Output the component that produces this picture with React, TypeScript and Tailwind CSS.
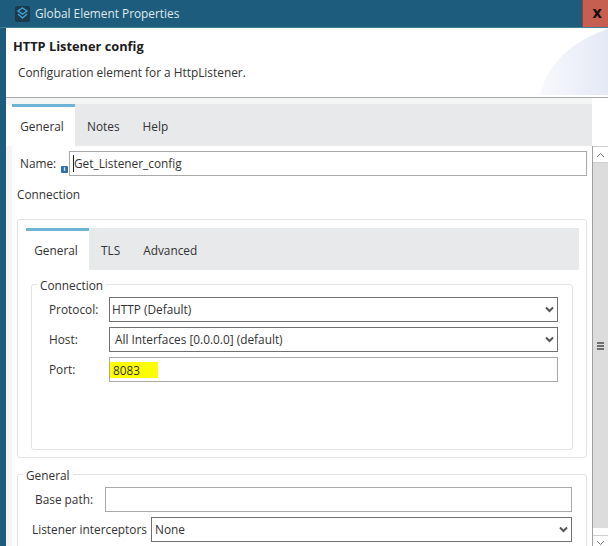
import type { ReactNode } from "react";

const FONT = "font-['Open_Sans','Noto_Sans',sans-serif]";

function Chevron() {
  return (
    <svg width="9" height="7" viewBox="0 0 9 7" className="shrink-0">
      <path d="M1 1.5 L4.5 5 L8 1.5" fill="none" stroke="#555" strokeWidth="2" />
    </svg>
  );
}

function SelectBox({ value, className, pad = "pl-[3px]" }: { value: string; className: string; pad?: string }) {
  return (
    <div className={`flex h-[25px] items-center justify-between border border-[#707070] bg-white pr-[3px] ${pad} ${className}`}>
      <span>{value}</span>
      <Chevron />
    </div>
  );
}

function Tabs({ items, barClass, tabClass }: { items: string[]; barClass: string; tabClass: string }) {
  return (
    <div className={`flex bg-[#e8e9ea] ${barClass}`}>
      <div className={`flex items-center justify-center border-t-[3px] border-[#6db3d6] bg-white pr-[3px] ${tabClass}`}>{items[0]}</div>
      <div className="flex items-center gap-[23px] pl-[12px] pt-[3px]">
        {items.slice(1).map((t) => (
          <span key={t}>{t}</span>
        ))}
      </div>
    </div>
  );
}

function Group({ title, className, children }: { title: string; className: string; children: ReactNode }) {
  return (
    <fieldset className={`rounded-[3px] border border-[#e2e3e3] ${className}`}>
      <legend className="-ml-[4px] translate-y-[1px] px-[3px] leading-[16px]">{title}</legend>
      {children}
    </fieldset>
  );
}

function Scrollbar() {
  return (
    <div className="flex h-[400px] w-[16px] shrink-0 flex-col border-l border-[#a0a0a0] bg-[#dcdcdc]">
      <div className="flex h-[17px] items-center justify-center border-y border-[#cfcfcf] bg-white">
        <svg width="9" height="6" viewBox="0 0 9 6">
          <path d="M1 5 L4.5 1.5 L8 5" fill="none" stroke="#777" strokeWidth="1" />
        </svg>
      </div>
      <div className="flex flex-1 items-center justify-center">
        <div className="flex w-[7px] flex-col gap-[1px]">
          <div className="h-[2px] bg-[#6f6f6f]" />
          <div className="h-[2px] bg-[#6f6f6f]" />
          <div className="h-[2px] bg-[#6f6f6f]" />
        </div>
      </div>
      <div className="h-[7px] bg-white" />
      <div className="flex h-[11px] items-start justify-center border-t border-[#cfcfcf] bg-white pt-[4px]">
        <svg width="9" height="6" viewBox="0 0 9 6">
          <path d="M1 1 L4.5 4.5 L8 1" fill="none" stroke="#777" strokeWidth="1" />
        </svg>
      </div>
    </div>
  );
}

export default function App() {
  return (
    <div className={`${FONT} flex h-[546px] w-[608px] flex-col overflow-hidden bg-[#1d5c7c] text-[11.85px] text-[#333]`}>
      <div className="flex h-[28px] shrink-0 items-stretch border-b border-[#3f7f93]">
        <div className="flex flex-1 items-center pl-[15px] text-[#dfe9ee]">
          <svg width="15" height="16" viewBox="0 0 15 16" className="mr-[5px]">
            <rect width="15" height="16" rx="2" fill="#1b3a4c" />
            <path d="M7.5 2 L12 5 L7.5 8 L3 5 Z" fill="none" stroke="#3f9fd0" strokeWidth="1.5" />
            <path d="M3 8 L7.5 12 L12 8" fill="none" stroke="#3f9fd0" strokeWidth="1.5" />
          </svg>
          Global Element Properties
        </div>
        <div className="flex w-[26px] items-center justify-center border-l border-[#7a4a45] bg-[#c75f50] pl-[3px] pb-[3px] text-[16px] font-bold leading-none text-[#151010]">
          x
        </div>
      </div>

      <div className="ml-[6px] flex min-h-0 flex-1 flex-col bg-white">
        <div className="relative h-[70px] shrink-0 overflow-hidden border-b border-[#a9a9a9] pl-[7px] pt-[10px]">
          <svg width="68" height="66" viewBox="0 0 68 66" className="absolute right-0 top-[1px]">
            <defs>
              <linearGradient id="hdr" x1="0" y1="0" x2="1" y2="0">
                <stop offset="0" stopColor="#f8f9fd" />
                <stop offset="1" stopColor="#e4e9f6" />
              </linearGradient>
            </defs>
            <path d="M0 66 C6 38 30 12 68 0 L68 66 Z" fill="url(#hdr)" />
          </svg>
          <div className="relative text-[12.8px] font-bold leading-[17px] text-[#1c1c1c]">HTTP Listener config</div>
          <div className="relative mt-[9px] pl-[5px] leading-[17px]">Configuration element for a HttpListener.</div>
        </div>

        <div className="flex min-h-0 flex-1">
          <div className="min-w-0 flex-1 bg-white">
            <div className="h-[6px] bg-[#f4f5f5]" />
            <div className="flex h-[442px] flex-col">
              <Tabs
                items={["General", "Notes", "Help"]}
                barClass="ml-[6px] h-[42px] shrink-0"
                tabClass="w-[63px]"
              />
              <div className="flex min-h-0 flex-1">
                <div className="w-[6px] shrink-0 bg-[#f4f5f5]" />
                <div className="min-w-0 flex-1 pl-[5px] pr-[5px]">
                  <div className="mt-[5px] flex items-center">
                    <div className="relative w-[52px] pl-[3px]">
                      Name:
                      <span className="absolute left-[44px] top-[11px] flex h-[7px] w-[7px] items-center justify-center rounded-[1px] bg-[#2f6fa8] text-[6px] font-bold leading-none text-white">
                        i
                      </span>
                    </div>
                    <div className="flex h-[25px] flex-1 items-center border border-[#a9a9a9] pl-[3px]">
                      <span className="h-[17px] w-px bg-[#222]" />
                      Get_Listener_config
                    </div>
                  </div>
                  <div className="mt-[10px] leading-[17px]">Connection</div>
                  <div className="mt-[16px] h-[239px] rounded-[3px] border border-[#e2e3e3] pl-[8px] pr-[7px] pt-[8px]">
                    <Tabs
                      items={["General", "TLS", "Advanced"]}
                      barClass="h-[42px]"
                      tabClass="w-[63px]"
                    />
                    <Group title="Connection" className="ml-[5px] mr-[6px] mt-[6px] h-[174px] pl-[9px] pr-[14px]">
                      <div className="mt-[5px] flex flex-col gap-[5px]">
                        <div className="flex items-center">
                          <span className="w-[68px] pl-[8px]">Protocol:</span>
                          <SelectBox value="HTTP (Default)" className="flex-1" pad="pl-[2px]" />
                        </div>
                        <div className="flex items-center">
                          <span className="w-[68px] pl-[8px]">Host:</span>
                          <SelectBox value="All Interfaces [0.0.0.0] (default)" className="flex-1" pad="pl-[5px]" />
                        </div>
                        <div className="flex items-center">
                          <span className="w-[68px] pl-[8px]">Port:</span>
                          <div className="flex h-[25px] flex-1 items-center border border-[#a9a9a9]">
                            <span className="h-[16px] w-[48px] bg-[#ffff00] pl-[3px] leading-[16px]">8083</span>
                          </div>
                        </div>
                      </div>
                    </Group>
                  </div>
                  <Group title="General" className="mt-[8px] h-[90px] pl-[9px] pr-[14px]">
                    <div className="mt-[5px] flex flex-col gap-[5px]">
                      <div className="flex items-center">
                        <span className="w-[78px] pl-[8px]">Base path:</span>
                        <div className="h-[25px] flex-1 border border-[#a9a9a9]" />
                      </div>
                      <div className="flex items-center">
                        <span className="w-[124px] pl-[5px]">Listener interceptors</span>
                        <SelectBox value="None" className="flex-1" />
                      </div>
                    </div>
                  </Group>
                </div>
              </div>
            </div>
          </div>
          <div className="pt-[48px]">
            <Scrollbar />
          </div>
        </div>
      </div>
    </div>
  );
}
